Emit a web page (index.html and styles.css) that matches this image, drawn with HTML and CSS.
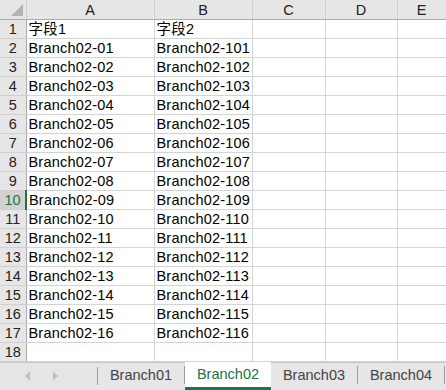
FILE: index.html
```html
<!DOCTYPE html>
<html>
	<head>
		<title>Branch02</title>
		<link rel="stylesheet" href="styles.css">
	</head>

	<body>
		<div class="sheet">
			<table id="grid">
				<colgroup>
					<col class="colHead">
					<col class="colA">
					<col class="colB">
					<col class="colC">
					<col class="colD">
					<col class="colE">
				</colgroup>
				<thead>
					<tr>
						<th class="corner"><span class="cornerMark"></span></th>
						<th>A</th>
						<th>B</th>
						<th>C</th>
						<th>D</th>
						<th>E</th>
					</tr>
				</thead>
				<tbody id="rows"></tbody>
			</table>
		</div>
		<div class="tabBar">
			<div class="nav">
				<span class="arrow left"></span>
				<span class="arrow right"></span>
			</div>
			<div class="tab">Branch01</div>
			<div class="tab active">Branch02</div>
			<div class="tab">Branch03</div>
			<div class="tab">Branch04</div>
		</div>
		<script>
			var rows = document.getElementById("rows");
			var data = [["字段1", "字段2"]];
			for (var i = 1; i <= 16; i++) {
				var n = i < 10 ? "0" + i : "" + i;
				data.push(["Branch02-" + n, "Branch02-1" + n]);
			}
			data.push(["", ""]);

			for (var r = 0; r < data.length; r++) {
				var tr = document.createElement("tr");
				var th = document.createElement("th");
				th.textContent = r + 1;
				if (r + 1 == 10) {
					th.className = "selected";
				}
				tr.appendChild(th);
				for (var c = 0; c < 5; c++) {
					var td = document.createElement("td");
					td.textContent = c < 2 ? data[r][c] : "";
					tr.appendChild(td);
				}
				rows.appendChild(tr);
			}
		</script>
	</body>
</html>
```

FILE: styles.css
```css
html, body {
	margin: 0px;
	padding: 0px;
	overflow: hidden;
	background: white;
	font-family: "Liberation Sans", "Noto Sans CJK SC", sans-serif;
	color: #000;
}

.sheet {
	height: 362px;
	overflow: hidden;
}

#grid {
	border-collapse: collapse;
	table-layout: fixed;
	width: 446px;
}

.colHead { width: 26px; }
.colA { width: 128px; }
.colB { width: 98px; }
.colC { width: 73px; }
.colD { width: 72px; }
.colE { width: 49px; }

th, td {
	height: 18px;
	padding: 0px;
	border: 1px solid #d4d4d4;
	white-space: nowrap;
	overflow: hidden;
	font-size: 14.5px;
	line-height: 18px;
}

td {
	padding: 1px 0px 0px 2px;
	height: 17px;
	line-height: 17px;
	text-align: left;
	letter-spacing: 0.2px;
}

thead th {
	height: 19px;
	background: #e6e6e6;
	border-color: #ababab #d0d0d0 #ababab #d0d0d0;
	font-weight: normal;
	color: #222;
	text-align: center;
	border-top: none;
}

tbody th {
	background: #e6e6e6;
	font-weight: normal;
	color: #222;
	text-align: center;
	border-left: none;
	border-color: #d0d0d0 #ababab #d0d0d0 #d0d0d0;
}

tbody th.selected {
	background: #d2d2d2;
	color: #217346;
	border-right: 2px solid #217346;
}

.corner {
	position: relative;
	border-left: none;
}

.cornerMark {
	position: absolute;
	right: 3px;
	bottom: 3px;
	width: 0px;
	height: 0px;
	border-left: 12px solid transparent;
	border-bottom: 12px solid #b4b4b4;
}

.tabBar {
	display: flex;
	height: 28px;
	background: #e6e6e6;
	border-top: 1px solid #c6c6c6;
	box-sizing: border-box;
	font-size: 14.5px;
	color: #444;
}

.nav {
	display: flex;
	align-items: center;
	gap: 23px;
	width: 98px;
	padding-left: 25px;
	box-sizing: border-box;
	border-right: 1px solid #9b9b9b;
	margin: 4px 0px 5px 0px;
}

.arrow {
	width: 0px;
	height: 0px;
	border-top: 5px solid transparent;
	border-bottom: 5px solid transparent;
}

.arrow.left {
	border-right: 5px solid #c0c0c0;
}

.arrow.right {
	border-left: 5px solid #c0c0c0;
}

.tab {
	width: 86px;
	display: flex;
	align-items: center;
	justify-content: center;
	border-right: 1px solid #9b9b9b;
	margin: 3px 0px 6px 0px;
}

.tab.active {
	background: white;
	color: #217346;
	margin: -1px 0px 0px 0px;
	border-right: none;
	border-bottom: 3px solid #217346;
	box-sizing: border-box;
	padding-bottom: 2px;
}
```
